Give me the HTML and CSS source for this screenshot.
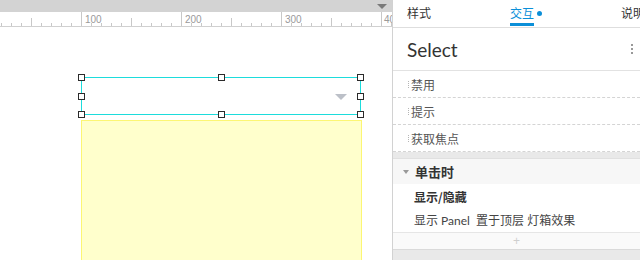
FILE: index.html
```html
<!DOCTYPE html>
<html lang="zh">
<head>
<meta charset="utf-8">
<title>Select</title>
<link rel="stylesheet" href="styles.css">
</head>
<body>
<div class="app">
  <div class="canvas-col">
    <div class="topbar"><span class="topbar-caret"></span></div>
    <div class="ruler">
      <svg class="ruler-ticks" width="392" height="15" viewBox="0 0 392 15">
        <path d="M1.5 11V15M11.5 11V15M21.5 11V15M31.5 6V15M41.5 11V15M51.5 11V15M61.5 11V15M71.5 11V15M81.5 0V15M91.5 11V15M101.5 11V15M111.5 11V15M121.5 11V15M131.5 6V15M141.5 11V15M151.5 11V15M161.5 11V15M171.5 11V15M181.5 0V15M191.5 11V15M201.5 11V15M211.5 11V15M221.5 11V15M231.5 6V15M241.5 11V15M251.5 11V15M261.5 11V15M271.5 11V15M281.5 0V15M291.5 11V15M301.5 11V15M311.5 11V15M321.5 11V15M331.5 6V15M341.5 11V15M351.5 11V15M361.5 11V15M371.5 11V15M381.5 0V15M391.5 11V15" stroke="#c8c8c8" stroke-width="1" fill="none"/>
        <path d="M0 14.5H392" stroke="#d0d0d0" stroke-width="1"/>
      </svg>
      <span class="ruler-label l100">100</span>
      <span class="ruler-label l200">200</span>
      <span class="ruler-label l300">300</span>
      <span class="ruler-label l400">400</span>
    </div>
    <div class="stage">
      <div class="sel-box">
        <span class="sel-caret"></span>
        <span class="handle h-tl"></span>
        <span class="handle h-tm"></span>
        <span class="handle h-tr"></span>
        <span class="handle h-ml"></span>
        <span class="handle h-mr"></span>
        <span class="handle h-bl"></span>
        <span class="handle h-bm"></span>
        <span class="handle h-br"></span>
      </div>
      <div class="yellow-panel"></div>
    </div>
  </div>

  <aside class="inspector">
    <nav class="tabs">
      <div class="tab">样式</div>
      <div class="tab active"><span class="tab-text">交互</span><span class="tab-dot"></span></div>
      <div class="tab">说明</div>
    </nav>
    <div class="title-row">
      <span class="title">Select</span>
      <span class="kebab"><i></i><i></i><i></i></span>
    </div>
    <div class="events">
      <div class="event-row"><span class="grip"></span>禁用</div>
      <div class="event-row"><span class="grip"></span>提示</div>
      <div class="event-row"><span class="grip"></span>获取焦点</div>
    </div>
    <div class="case-card">
      <div class="case-head"><span class="case-caret"></span>单击时</div>
      <div class="action-title">显示/隐藏</div>
      <div class="action-desc">显示 Panel&nbsp; 置于顶层 灯箱效果</div>
      <div class="add-row">+</div>
    </div>
  </aside>
</div>
</body>
</html>
```

FILE: styles.css
```css
* { box-sizing: border-box; }

html, body {
  margin: 0;
  padding: 0;
  width: 640px;
  height: 260px;
  overflow: hidden;
  background: #fff;
  font-family: "Lato", "Noto Sans CJK SC", sans-serif;
}

.app {
  display: flex;
  width: 640px;
  height: 260px;
}

/* ---------- canvas column ---------- */
.canvas-col {
  width: 392px;
  flex: none;
  display: flex;
  flex-direction: column;
  background: #fff;
  overflow: hidden;
}

.topbar {
  height: 12px;
  background: #d3d3d3;
  display: flex;
  justify-content: flex-end;
  align-items: center;
  padding-right: 5px;
}

.topbar-caret {
  width: 0;
  height: 0;
  border-left: 5px solid transparent;
  border-right: 5px solid transparent;
  border-top: 5px solid #7a7a7a;
}

.ruler {
  height: 15px;
  position: relative;
  background: #fff;
  overflow: hidden;
}

.ruler-ticks {
  display: block;
}

.ruler-label {
  position: absolute;
  top: 2px;
  font-family: "Liberation Sans", Arial, sans-serif;
  font-size: 10px;
  line-height: 11px;
  color: #9a9a9a;
}
.l100 { left: 85px; }
.l200 { left: 185px; }
.l300 { left: 285px; }
.l400 { left: 384px; }

.stage {
  flex: 1;
  position: relative;
  overflow: hidden;
}

.sel-box {
  position: absolute;
  left: 81px;
  top: 50px;
  width: 280px;
  height: 38px;
  border: 1px solid #1ddcdc;
  display: flex;
  align-items: center;
  justify-content: flex-end;
  padding-right: 13px;
}

.sel-caret {
  width: 0;
  height: 0;
  margin-top: 2px;
  border-left: 6px solid transparent;
  border-right: 6px solid transparent;
  border-top: 6px solid #bcc0c8;
}

.handle {
  position: absolute;
  width: 7px;
  height: 7px;
  background: #fff;
  border: 1.5px solid #2b2b2b;
}
.h-tl { left: -4px; top: -4px; }
.h-tm { left: 136px; top: -4px; }
.h-tr { left: 275px; top: -4px; }
.h-ml { left: -4px; top: 15px; }
.h-mr { left: 275px; top: 15px; }
.h-bl { left: -4px; top: 33px; }
.h-bm { left: 136px; top: 33px; }
.h-br { left: 275px; top: 33px; }

.yellow-panel {
  position: absolute;
  left: 81px;
  top: 93px;
  width: 281px;
  height: 200px;
  background: #ffffcc;
  border: 1px solid #fcf673;
}

/* ---------- inspector ---------- */
.inspector {
  width: 248px;
  flex: none;
  border-left: 1px solid #d2d2d2;
  background: #e9e9e9;
  display: flex;
  flex-direction: column;
  overflow: hidden;
}

.tabs {
  height: 28px;
  flex: none;
  display: flex;
  gap: 79px;
  padding-left: 14px;
  background: #fff;
  border-bottom: 1px solid #dedede;
  white-space: nowrap;
  font-family: "Noto Sans CJK SC", sans-serif;
}

.tab {
  padding-top: 5px;
  font-size: 12px;
  line-height: 16px;
  color: #333;
  display: flex;
  align-items: flex-start;
}

.tab-text {
  display: inline-block;
  color: #0b8fd8;
  padding-bottom: 2px;
  border-bottom: 3px solid #0b8fd8;
}

.tab-dot {
  width: 5px;
  height: 5px;
  border-radius: 50%;
  background: #0b8fd8;
  margin: 6px 0 0 3px;
}

.title-row {
  height: 43px;
  flex: none;
  display: flex;
  align-items: center;
  justify-content: space-between;
  padding: 0 7px 0 14px;
  background: #fff;
  border-bottom: 1px solid #e2e2e2;
}

.title {
  font-family: "Lato", sans-serif;
  font-size: 19px;
  color: #333;
}

.kebab {
  display: flex;
  flex-direction: column;
  gap: 2px;
}
.kebab i {
  display: block;
  width: 2px;
  height: 2px;
  border-radius: 50%;
  background: #777;
}

.events {
  background: #fff;
  flex: none;
}

.event-row {
  height: 27px;
  display: flex;
  align-items: center;
  padding-left: 18px;
  font-family: "Noto Sans CJK SC", sans-serif;
  font-size: 12px;
  color: #555;
  border-bottom: 1px dashed #d4d4d4;
}

.grip {
  width: 1px;
  height: 7px;
  border-left: 1px dotted #b5b5b5;
  margin-right: 2px;
  margin-left: -3px;
}

.case-card {
  margin-top: 6px;
  flex: none;
  background: #fff;
  border-top: 1px solid #e0e0e0;
  font-family: "Noto Sans CJK SC", sans-serif;
}

.case-head {
  height: 25px;
  display: flex;
  align-items: center;
  padding-left: 10px;
  background: #f7f7f7;
  font-size: 13px;
  font-weight: bold;
  color: #333;
}

.case-caret {
  width: 0;
  height: 0;
  border-left: 3px solid transparent;
  border-right: 3px solid transparent;
  border-top: 4px solid #999;
  margin-right: 6px;
}

.action-title {
  height: 24px;
  display: flex;
  align-items: center;
  padding-left: 21px;
  font-size: 12px;
  font-weight: bold;
  color: #333;
}

.action-desc {
  height: 22px;
  display: flex;
  align-items: center;
  padding-left: 21px;
  font-family: "Lato", "Noto Sans CJK SC", sans-serif;
  font-size: 12px;
  color: #444;
  white-space: nowrap;
}

.add-row {
  margin-top: 2px;
  height: 18px;
  display: flex;
  align-items: center;
  justify-content: center;
  background: #fafafa;
  border-top: 1px solid #e6e6e6;
  border-bottom: 1px solid #dadada;
  font-family: "Liberation Sans", sans-serif;
  font-size: 12px;
  color: #cfcfcf;
}
```
